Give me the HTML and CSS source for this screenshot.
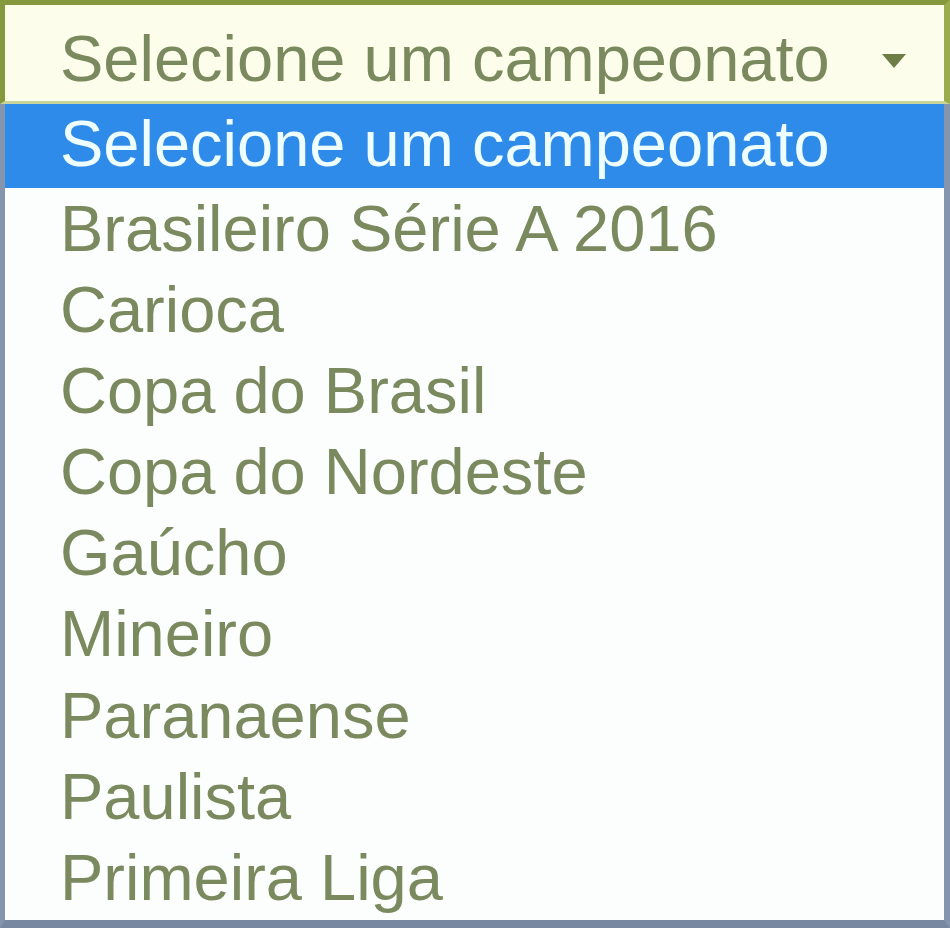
FILE: index.html
```html
<!DOCTYPE html>
<html lang="pt-BR">
<head>
<meta charset="utf-8">
<title>Selecione um campeonato</title>
<link rel="stylesheet" href="styles.css">
</head>
<body>
<div class="dropdown">
  <div class="select">
    <span class="select-label">Selecione um campeonato</span>
    <svg class="arrow" width="28" height="17" viewBox="0 0 28 17"><path d="M2 2 L26 2 L14 16 Z" fill="#6d7d45"/></svg>
  </div>
  <ul class="options">
    <li class="option selected">Selecione um campeonato</li>
    <li class="option">Brasileiro Série A 2016</li>
    <li class="option">Carioca</li>
    <li class="option">Copa do Brasil</li>
    <li class="option">Copa do Nordeste</li>
    <li class="option">Gaúcho</li>
    <li class="option">Mineiro</li>
    <li class="option">Paranaense</li>
    <li class="option">Paulista</li>
    <li class="option">Primeira Liga</li>
  </ul>
</div>
</body>
</html>
```
FILE: styles.css
```css
html, body {
  margin: 0;
  padding: 0;
  background: #ffffff;
}
.dropdown {
  width: 950px;
  height: 928px;
  display: flex;
  flex-direction: column;
  font-family: "Liberation Sans", Arial, sans-serif;
  font-size: 65px;
  color: #7b8a5e;
  overflow: hidden;
}
.select {
  box-sizing: border-box;
  height: 104px;
  display: flex;
  align-items: flex-start;
  border-top: 5px solid #86983e;
  border-left: 5px solid #86983e;
  border-right: 6px solid #9aac4c;
  border-bottom: 3px solid #c9d49a;
  background: #fcfdeb;
  padding: 18px 0 0 55px;
}
.select-label {
  line-height: 72px;
  flex: 1;
}
.arrow {
  margin: 29px 36px 0 0;
}
.options {
  list-style: none;
  margin: 0;
  padding: 0;
  flex: 1;
  box-sizing: border-box;
  border-left: 5px solid #8595ad;
  border-right: 6px solid #8595ad;
  border-bottom: 8px solid #7888a0;
  background: #fbfefd;
}
.option {
  height: 81.1px;
  line-height: 81.1px;
  padding-left: 55px;
  white-space: nowrap;
}
.option.selected {
  height: 84px;
  line-height: 80px;
  background: #2f8be9;
  color: #eefeff;
}
```
